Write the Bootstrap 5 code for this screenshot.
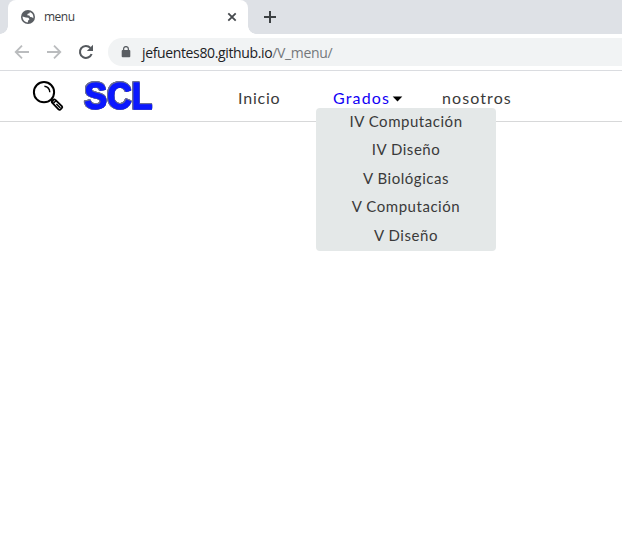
<!DOCTYPE html>
<html lang="es">
<head>
<meta charset="utf-8">
<meta name="viewport" content="width=device-width, initial-scale=1">
<title>menu</title>
<link href="https://cdn.jsdelivr.net/npm/bootstrap@5.3.0/dist/css/bootstrap.min.css" rel="stylesheet">
<style>
body{font-family:"Open Sans","Noto Sans",sans-serif;height:536px;overflow:hidden;background:#fff}
svg{display:block;flex:none}
.tabstrip{height:34px;background:#dee1e6;padding-left:8px}
.tab-active{width:240px;background:#fff;border-radius:8px 8px 0 0;padding:0 10px 0 13px;font-size:12px;color:#3c4043;position:relative}
.tab-active::before,.tab-active::after{content:"";position:absolute;bottom:0;width:8px;height:8px}
.tab-active::before{left:-8px;background:radial-gradient(circle at 0 0,transparent 7.5px,#fff 8px)}
.tab-active::after{right:-8px;background:radial-gradient(circle at 100% 0,transparent 7.5px,#fff 8px)}
.tab-label{margin-left:9px;letter-spacing:-.5px}
.new-tab{margin-left:16px}
.toolbar{height:37px;border-bottom:1px solid #dadce0;padding-left:14px}
.address{height:28px;margin-left:14px;background:#f1f3f4;border-radius:14px 0 0 14px;padding-left:13px;font-size:14px;color:#202124}
.url{margin-left:11px;white-space:nowrap;letter-spacing:-.36px}
.url span{color:#74787c}
.site-bar{height:51px;border-bottom:1px solid #d7d8d9;padding:0}
.search-icon{margin-left:32px}
.logo{margin-left:18px;overflow:visible;filter:drop-shadow(.5px 0 0 #6c7096) drop-shadow(-.5px 0 0 #6c7096) drop-shadow(0 .5px 0 #6c7096) drop-shadow(0 -.5px 0 #6c7096)}
.menu-list{font-family:Lato,sans-serif;font-size:16px;line-height:24px;padding-top:3px}
.menu-list a{color:#3a3a3a;text-decoration:none;white-space:nowrap;display:block;padding:0}
.item-home{margin-left:82px;width:95px}
.item-grades{width:109px}
.item-home a{letter-spacing:.8px}
.menu-list .item-grades>a{color:#1200f5;letter-spacing:1.15px;display:flex;align-items:center}
.item-grades>a svg{margin-left:2px;margin-top:2px}
.item-about a{letter-spacing:1.1px}
.grades-menu{position:absolute;left:-17px;top:22px;width:180px;height:143px;background:#e4e8e8;border-radius:4px;z-index:2;font-size:15px;text-align:center}
.grades-menu li{height:28.5px;line-height:27px}
.grades-menu a{letter-spacing:.54px}
</style>
<script src="https://cdn.jsdelivr.net/npm/bootstrap@5.3.0/dist/js/bootstrap.bundle.min.js"></script>
</head>
<body>
<div class="tabstrip d-flex">
  <div class="tab-active d-flex align-items-center">
    <svg width="14" height="14" viewBox="0 0 14 14"><circle cx="7" cy="7" r="7" fill="#5a5e63"/><path d="M1.6 6.5 4.8 7.5 7.4 7.7 8.5 9.2 7.2 10.4 6.7 12.4C3.6 12.2 1.3 9.4 1.6 6.5ZM8.8 1.9 8.6 3.2 6.7 3.8 6.2 5.2 8.3 5.6 9.2 7.1 11 7.2 12.3 8.2C12.9 5.3 11.2 2.7 8.8 1.9Z" fill="#fff"/></svg>
    <span class="tab-label">menu</span>
    <svg class="ms-auto" width="12" height="12" viewBox="0 0 12 12"><path d="M2.3 2.3 9.7 9.7M9.7 2.3 2.3 9.7" stroke="#45494d" stroke-width="1.8"/></svg>
  </div>
  <svg class="new-tab align-self-center" width="12" height="12" viewBox="0 0 12 12"><path d="M6 0V12M0 6H12" stroke="#3c4043" stroke-width="2"/></svg>
</div>
<div class="toolbar d-flex align-items-center">
  <svg width="16" height="16" viewBox="0 0 16 16" fill="none" stroke="#babcbe" stroke-width="1.8"><path d="M15 8H2.2M8 1.7 1.7 8 8 14.3"/></svg>
  <svg class="ms-3" width="16" height="16" viewBox="0 0 16 16" fill="none" stroke="#babcbe" stroke-width="1.8"><path d="M1 8H13.8M8 1.7 14.3 8 8 14.3"/></svg>
  <svg class="ms-3" width="16" height="16" viewBox="0 0 16 16"><path d="M13.6 10A6 6 0 1 1 12.4 3.9" fill="none" stroke="#55595e" stroke-width="2.1"/><path d="M15 .8V7H8.8Z" fill="#55595e"/></svg>
  <div class="address d-flex align-items-center flex-grow-1">
    <svg width="10" height="12" viewBox="0 0 10 12"><rect x=".7" y="4" width="8.6" height="7.3" rx="1" fill="#5a5e63"/><path d="M2.6 4.5V3a2.4 2.4 0 0 1 4.8 0V4.5" fill="none" stroke="#5a5e63" stroke-width="1.3"/></svg>
    <div class="url">jefuentes80.github.io<span>/V_menu/</span></div>
  </div>
</div>
<nav class="navbar site-bar flex-nowrap justify-content-start">
  <svg class="search-icon" width="32" height="32" viewBox="-.4 -.6 32 32" fill="none" stroke="#000" stroke-width="2"><circle cx="11.6" cy="11.6" r="10.1"/><path d="M12 5.7A6.3 6.3 0 0 1 17.4 11.7" stroke-width="1.4"/><path d="M18.6 18.6 21 21"/><path d="M19.5 21.8Q19 21 19.8 20.2L21.2 19Q22.2 18.5 23 19.4L29.6 25.8Q30.3 26.7 29.4 27.5L27.9 29Q27 29.7 26.1 28.8Z" stroke-width="1.8"/><path d="M20.8 22.8 23.8 19.9M24 23.5 28 27.5" stroke-width="1.4"/></svg>
  <svg class="logo" width="74" height="42" viewBox="0 0 74 42"><text x="2.5" y="34.4" textLength="68" lengthAdjust="spacingAndGlyphs" font-family="Liberation Sans, sans-serif" font-weight="700" font-size="36" fill="#0b18ff" stroke="#0b18ff" stroke-width="1.3" stroke-linejoin="round">SCL</text></svg>
  <ul class="menu-list list-unstyled d-flex mb-0">
    <li class="item-home"><a href="#">Inicio</a></li>
    <li class="item-grades position-relative"><a href="#">Grados<svg width="11" height="6" viewBox="0 0 11 6"><path d="M.7.5H10.3L5.5 5.5Z" fill="#000"/></svg></a>
      <ul class="grades-menu list-unstyled">
        <li><a href="#">IV Computación</a></li>
        <li><a href="#">IV Diseño</a></li>
        <li><a href="#">V Biológicas</a></li>
        <li><a href="#">V Computación</a></li>
        <li><a href="#">V Diseño</a></li>
      </ul>
    </li>
    <li class="item-about"><a href="#">nosotros</a></li>
  </ul>
</nav>
</body>
</html>
